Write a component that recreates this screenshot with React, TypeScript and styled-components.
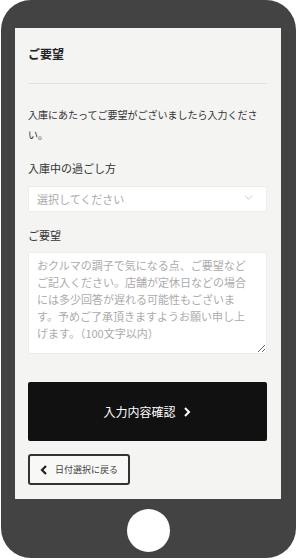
import React from "react";
import styled, { createGlobalStyle } from "styled-components";

const GlobalStyle = createGlobalStyle`
  html, body {
    margin: 0;
    padding: 0;
    background: #ffffff;
  }
  body {
    font-family: "Noto Sans CJK JP", "Noto Sans", sans-serif;
  }
`;

const placeholderText =
  "おクルマの調子で気になる点、ご要望など\nご記入ください。店舗が定休日などの場合\nには多少回答が遅れる可能性もございま\nす。予めご了承頂きますようお願い申し上\nげます。（100文字以内）";

const Chevron = ({ dir, size, stroke }: { dir: "left" | "right" | "down"; size: number; stroke: number }) => {
  const points =
    dir === "right" ? "3,1 7,5 3,9" : dir === "left" ? "7,1 3,5 7,9" : "1,3 5,7 9,3";
  return (
    <svg width={size} height={size} viewBox="0 0 10 10">
      <polyline points={points} fill="none" stroke="currentColor" strokeWidth={stroke} />
    </svg>
  );
};

const App = () => {
  return (
    <>
      <GlobalStyle />
      <Phone>
        <Screen>
          <Title>ご要望</Title>
          <Description>入庫にあたってご要望がございましたら入力ください。</Description>
          <FieldLabel>入庫中の過ごし方</FieldLabel>
          <SelectWrap>
            <Select defaultValue="">
              <option value="" disabled>
                選択してください
              </option>
              <option value="wait">店舗で待つ</option>
              <option value="leave">お預け</option>
            </Select>
            <SelectArrow>
              <Chevron dir="down" size={9} stroke={1} />
            </SelectArrow>
          </SelectWrap>
          <FieldLabel>ご要望</FieldLabel>
          <TextArea placeholder={placeholderText} />
          <ConfirmButton type="button">
            入力内容確認
            <Chevron dir="right" size={10} stroke={2} />
          </ConfirmButton>
          <BackButton type="button">
            <Chevron dir="left" size={10} stroke={2.2} />
            日付選択に戻る
          </BackButton>
        </Screen>
        <BottomBezel>
          <HomeButton />
        </BottomBezel>
      </Phone>
    </>
  );
};
export default App;

const Phone = styled.div`
  width: 295px;
  height: 558px;
  margin-left: 1px;
  background: #434343;
  border-radius: 30px;
  padding: 28px 15px 0 14px;
  box-sizing: border-box;
  display: flex;
  flex-direction: column;
`;
const Screen = styled.div`
  height: 471px;
  background: #f4f4f2;
  padding: 16px 14px 0 13px;
  box-sizing: border-box;
  display: flex;
  flex-direction: column;
`;
const Title = styled.div`
  font-size: 12px;
  line-height: 20px;
  font-weight: 700;
  color: #222;
  padding-bottom: 19px;
  border-bottom: 1px solid #e2e2e0;
`;
const Description = styled.p`
  margin: 21px 0 0;
  font-size: 10px;
  line-height: 20px;
  color: #333;
`;
const FieldLabel = styled.div`
  margin-top: 14px;
  margin-bottom: 8px;
  font-size: 11px;
  line-height: 18px;
  color: #333;
`;
const SelectWrap = styled.div`
  position: relative;
  width: 100%;
`;
const Select = styled.select`
  appearance: none;
  width: 100%;
  height: 26px;
  background: #fff;
  border: 1px solid #ececea;
  border-radius: 2px;
  padding: 0 8px;
  font-family: inherit;
  font-size: 11px;
  color: #aaa;
  outline: none;
`;
const SelectArrow = styled.span`
  position: absolute;
  right: 14px;
  top: 8px;
  color: #c4c4c4;
  display: flex;
  pointer-events: none;
`;
const TextArea = styled.textarea`
  width: 100%;
  height: 102px;
  box-sizing: border-box;
  background: #fff;
  border: 1px solid #ececea;
  border-radius: 2px;
  padding: 4px 8px;
  font-family: inherit;
  font-size: 11px;
  line-height: 17px;
  color: #333;
  outline: none;
  &::placeholder {
    color: #ababab;
  }
`;
const ConfirmButton = styled.button`
  margin-top: 28px;
  width: 100%;
  height: 59px;
  background: #111;
  border: none;
  border-radius: 2px;
  color: #fff;
  font-family: inherit;
  font-size: 12px;
  display: flex;
  align-items: center;
  justify-content: center;
  gap: 6px;
  padding: 0;
`;
const BackButton = styled.button`
  margin-top: 13px;
  width: 102px;
  height: 31px;
  align-self: flex-start;
  box-sizing: border-box;
  background: #f8f8f7;
  border: 2px solid #333;
  border-radius: 3px;
  color: #444;
  font-family: inherit;
  font-size: 9px;
  display: flex;
  align-items: center;
  gap: 6px;
  padding: 0 0 0 9px;
  svg {
    color: #222;
  }
`;
const BottomBezel = styled.div`
  flex: 1;
  display: flex;
  justify-content: center;
  padding-top: 10px;
`;
const HomeButton = styled.div`
  width: 43px;
  height: 43px;
  border-radius: 50%;
  background: #fff;
`;
